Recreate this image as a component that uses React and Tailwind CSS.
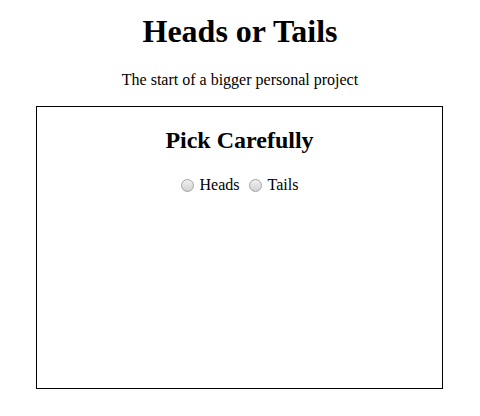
import React from "react";

function Radio({ className }) {
  return (
    <input
      type="radio"
      name="pick"
      className={
        "appearance-none w-[13px] h-[13px] rounded-full border border-[#a3a3a3] bg-[linear-gradient(180deg,#f0f0f0,#d2d2d2)] m-0 shrink-0 " +
        className
      }
    />
  );
}

export default function App() {
  return (
    <div className="font-['Liberation_Serif',serif] text-black bg-white w-[480px] h-[416px] overflow-hidden">
      <h1 className="text-[32px] font-bold leading-[37px] text-center mt-[13px]">
        Heads or Tails
      </h1>
      <p className="text-[16px] leading-[18px] text-center mt-[21px]">
        The start of a bigger personal project
      </p>
      <div className="mt-[17px] ml-[36px] w-[407px] h-[283px] border border-black">
        <h2 className="text-[24px] font-bold leading-[28px] text-center mt-[19px]">
          Pick Carefully
        </h2>
        <div className="mt-[22px] pr-[5px] flex justify-center items-center text-[16px] leading-[18px]">
          <Radio className="ml-[5px] mr-[6px]" />
          <span>Heads</span>
          <Radio className="ml-[9px] mr-[6px]" />
          <span>Tails</span>
        </div>
      </div>
    </div>
  );
}
